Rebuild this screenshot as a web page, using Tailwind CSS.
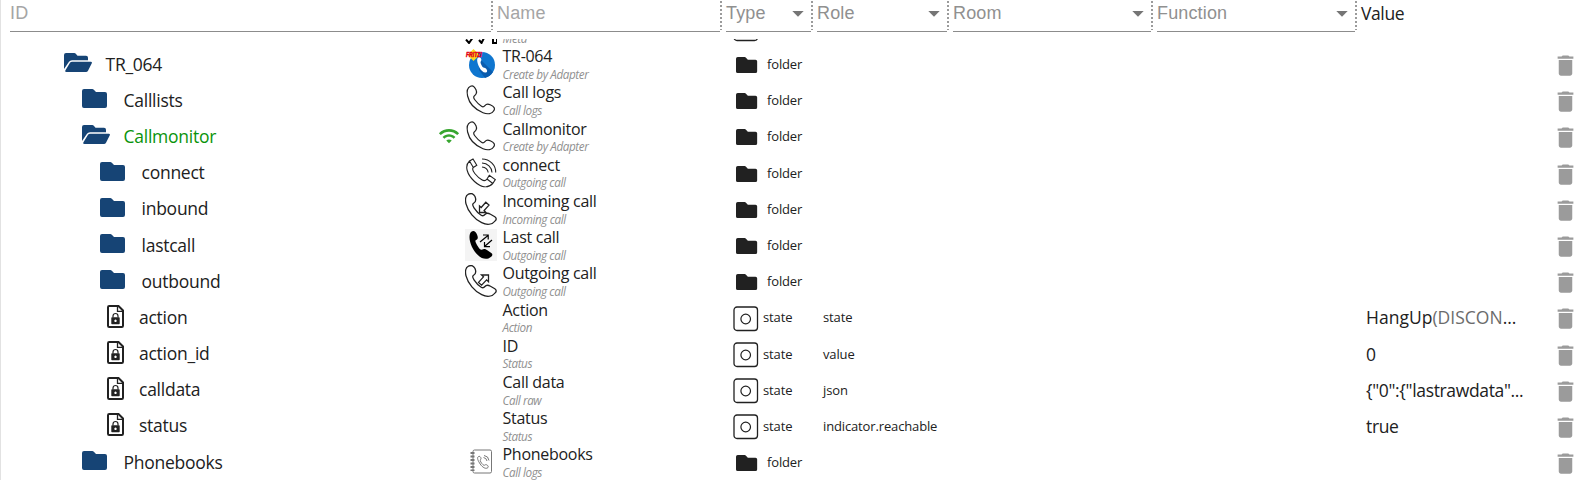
<!DOCTYPE html>
<html lang="en">
<head>
<meta charset="utf-8">
<title>Objects</title>
<script src="https://cdn.jsdelivr.net/npm/@tailwindcss/browser@4"></script>
</head>
<body class="bg-white">
<svg class="hidden">
  <symbol id="closed" viewBox="0 0 26 20"><path fill="currentColor" d="M2 0h8.200q1 0 1.600.7l2.200 2.400h9q2 0 2 2V17q0 2-2 2H2q-2 0-2-2V2Q0 0 2 0z"/></symbol>
  <symbol id="open" viewBox="0 0 29 20"><path fill="currentColor" d="M2 0h8.200q1 0 1.600.700l1.700 2h8.500q2 0 2 2V7.300H8q-2 0-3 1.500L0 16V2Q0 0 2 0zM8.300 8.700H27q1.500 0 .8 1.500L24 17.700Q23.300 19 22 19H2.500Q.7 19 1.300 17.500L6 9.700Q6.700 8.700 8.300 8.700z"/></symbol>
  <symbol id="doc" viewBox="0 0 18 24"><path fill="none" stroke="currentColor" stroke-width="2" d="M2.200 1H11.500L16 5.500V20.800q0 1.200-1.200 1.200H2.200Q1 22 1 20.800V2.200Q1 1 2.200 1z"/><path fill="none" stroke="currentColor" stroke-width="1.300" d="M10.500 1V6.300H16"/><path fill="none" stroke="currentColor" stroke-width="1.200" d="M6 12.500V11a2.500 2.500 0 0 1 5 0v1.500"/><path fill="currentColor" fill-rule="evenodd" d="M5 12.300h7q.7 0 .7.700v5.600q0 .7-.7.700H5q-.7 0-.7-.700V13q0-.7.7-.700zM8.500 14.600a1.200 1.200 0 1 0 .010 0z"/></symbol>
  <symbol id="trash" viewBox="0 0 24 24"><path fill="currentColor" d="M6 19c0 1.100.9 2 2 2h8c1.100 0 2-.9 2-2V7H6v12zM19 4h-3.500l-1-1h-5l-1 1H5v2h14V4z"/></symbol>
  <symbol id="state" viewBox="0 0 26 26"><rect x="1" y="1" width="23.500" height="23.500" rx="3" fill="none" stroke="currentColor" stroke-width="1.300"/><circle cx="12.700" cy="13" r="4.800" fill="none" stroke="currentColor" stroke-width="1.200"/></symbol>
  <symbol id="wifi" viewBox="0 0 24 24"><path fill="currentColor" d="M1 9l2 2c4.970-4.970 13.030-4.970 18 0l2-2C16.930 2.930 7.080 2.930 1 9zm8 8l3 3 3-3c-1.650-1.660-4.340-1.660-6 0zm-4-4l2 2c2.760-2.760 7.240-2.760 10 0l2-2C15.140 9.140 8.870 9.140 5 13z"/></symbol>
  <symbol id="phone" viewBox="0 0 32 32"><path fill="none" stroke="currentColor" stroke-width="1.200" d="M5.500 2.300C8 1.200 9.600 2.500 11 5.800c1.200 3 .8 4.300-1.500 5.900-1.300 1-.9 2.500.5 4.300 2 2.600 4 4.800 6.500 6.300 1.500.9 2.400.6 3.400-.7 1.400-1.700 2.900-2 5.300-.8 4.200 2 5 3.500 3.800 5.600-2 3.500-6.500 4.200-11 2.300C9.500 25.200 4 18.500 2.600 12 1.600 7.500 2.300 3.800 5.500 2.300z"/></symbol>
  <symbol id="handset" viewBox="0 0 32 32"><path fill="none" stroke="currentColor" stroke-width="1.300" d="M3.500 1.200C6.500-.3 8.800.8 10 3.600c1.400 3.400 1.200 5.200-1.400 6.700-1.400.8-1 2.300.4 4.500 2 3 4.300 5.600 7.200 7.400 1.500.9 2.600.7 3.700-.7 1.200-1.500 2.900-1.800 5.600-.3l4.300 2.500c1.600 1 1.800 2.600.6 4-3 4-8.500 4.600-13.700 2C9.500 26.300 3 18.500 1 10.800 0 6.500.6 2.600 3.500 1.200z"/></symbol>
</svg>
<div class="h-[480px] w-[1587px] overflow-hidden border-l border-[#e2e2e2] font-['Open_Sans','Noto_Sans',sans-serif] text-[#212121]">
  <header id="head" class="flex h-[39px] items-start pl-[9px] font-['Liberation_Sans',Arial,sans-serif] text-[18px] leading-[26px]"></header>
  <main id="rows" class="flex h-[441px] flex-col overflow-hidden"></main>
</div>
<script>
const heads = [
  ['ID', 'w-[481px] text-[#a5a5a5]', 0], ['Name', 'w-[223px] text-[#a5a5a5]', 0],
  ['Type', 'w-[85px] text-[#909090]', 1], ['Role', 'w-[130px] text-[#909090]', 1],
  ['Room', 'w-[198px] text-[#909090]', 1], ['Function', 'w-[198px] text-[#909090]', 1]];
const caret = '<svg class="mr-[7.500px] mt-[11px] h-[6px] w-[12px] text-[#757575]" viewBox="0 0 12 6"><path fill="currentColor" d="M.3 0h11.400L6 5.700z"/></svg>';
const dots = '<svg class="mr-[4px] h-[30px] w-[2px]" viewBox="0 0 2 30"><path stroke="#9b9b9b" stroke-width="2" stroke-dasharray="2 2" d="M1 1V30"/></svg>';
document.getElementById('head').innerHTML = heads.map(([t, c, a]) =>
  `<div class="flex h-[32px] shrink-0 justify-between border-b border-[#8c8c8c] tracking-[0.15px] ${c}"><span>${t}</span>${a ? caret : ''}</div>${dots}`).join('') +
  `<div class="font-['Open_Sans','Noto_Sans',sans-serif] text-[17.500px] tracking-[-0.4px]">Value</div>`;

const use = (id, c) => `<svg class="shrink-0 ${c}"><use href="#${id}"/></svg>`;
const pic = inner => `<svg class="size-[32px] shrink-0 text-[#222]" viewBox="0 0 32 32">${inner}</svg>`;
const pics = {
  none: '<span class="w-[32px] shrink-0"></span>',
  clip: pic('<path fill="none" stroke="#000" stroke-width="2" d="M1 27.500l3 3.500 3.500-5M14 28l2.500 3 3-6M28 25v6h4v-6"/>'),
  tr: pic('<circle cx="17" cy="17" r="13" fill="#0f76cf"/><path fill="#0a5cae" d="M16 12l12 12a13 13 0 0 1-8 6l-6-8z"/><path fill="#fff" d="M13.200 9.500c2-1.200 4 2 2.800 3.600-.8 1-.6 1.800.3 3.600.9 1.900 1.700 3 3 3 1.700 0 3.700 3 2.500 4.200-2 1.800-5.500-.7-7.500-4.700-2-3.900-3-8.500-1.100-9.700z"/><path fill="#ffd91a" d="M8.500 1l6 6-6 6-6-6z"/><text x="1" y="9" font-family="Liberation Sans" font-size="7" font-weight="700" font-style="italic" fill="#e2001a" stroke="#e2001a" stroke-width=".5" textLength="16" lengthAdjust="spacingAndGlyphs">FRITZ!</text>'),
  phone: pic('<use href="#phone"/>'),
  connect: pic('<g fill="none" stroke="currentColor" stroke-width="1.100"><path d="M4.500 4L8 2l3.800 6.300L8.300 10.500zM22 22l2.300-3.600 6 4.200-2.500 3.900zM4.500 4C-.8 9 2 17.500 9.500 24.500c6 5.500 13 7.500 18.300 2M8.300 10.500c-1.500 1.500-.5 3.500 1.500 6 2.200 2.700 4.700 5 7 6.300 2 1.200 4 .9 5.200-.8"/><path d="M17 2C25 2 31 8.500 30.700 15.500M17 6c5.500.2 9.800 4.300 10 9.500M17 10c3.300.2 5.700 2.300 6.200 5.500"/></g>'),
  incoming: pic('<use href="#handset"/><path fill="none" stroke="currentColor" stroke-width="1.300" d="M14.500 13v6.500h6.500l-1.900-2 4.900-5.400-3.200-2.900-4.600 5.300z"/>'),
  outgoing: pic('<use href="#handset"/><path fill="none" stroke="currentColor" stroke-width="1.300" d="M23.500 10h-7l2 1.900-5 5.500 3.100 2.800 5-5.300 1.900 1.900z"/>'),
  last: pic('<rect width="32" height="32" fill="#f4f4f4"/><path fill="#000" d="M6 3C8.500 1 10.500 2 12 5.500c1.500 3.300.8 4.800-1.300 5.800-.8.500 0 2.500 1.600 5.200 1.700 2.800 3.200 4.600 4.500 4.300 1.800-.9 3-1.300 5.500.4l4 2.800c1.700 1.300 1.200 2.600-.5 4-3.500 3-8.500 2.400-13-2C6.500 20 2 8 6 3z"/><path fill="none" stroke="#000" stroke-width="1.200" d="M15 13l8-6.500M18 6h5.200v4.500M27 11l-7.500 6.500M19.500 13v4.700H25"/>'),
  book: pic('<g fill="none" stroke="#777" stroke-width="1"><rect x="8" y="4" width="18.500" height="23" rx="1.500"/><path stroke-dasharray="2 1.500" stroke-width="4" d="M7.500 6v19"/><path d="M13.500 10.500c1.500-1 3.500 2 2 3.200-.9.800.8 3.500 2.500 5 1.200 1 1.700.5 2.500 0 1.500-.5 3.500 1.800 2.500 2.800-2 2-5.500 0-7.800-3.500-2-3-3.700-6.200-1.700-7.500zM18.500 11.500q3 .5 3.500 3.500M19 9.500q4.500.5 5 5"/></g>')
};
// level, id, picture, name, description, role, value, flags (s: state, o: open, g: connected)
const data = [
  [2, '', 'clip', '', 'Meta', '', '', 's'],
  [0, 'TR_064', 'tr', 'TR-064', 'Create by Adapter', '', '', 'o'],
  [1, 'Calllists', 'phone', 'Call logs', 'Call logs', '', '', ''],
  [1, 'Callmonitor', 'phone', 'Callmonitor', 'Create by Adapter', '', '', 'og'],
  [2, 'connect', 'connect', 'connect', 'Outgoing call', '', '', ''],
  [2, 'inbound', 'incoming', 'Incoming call', 'Incoming call', '', '', ''],
  [2, 'lastcall', 'last', 'Last call', 'Outgoing call', '', '', ''],
  [2, 'outbound', 'outgoing', 'Outgoing call', 'Outgoing call', '', '', ''],
  [2, 'action', 'none', 'Action', 'Action', 'state', '<span class="tracking-[0.01px]">HangUp<span class="text-[#6b6b6b]">(DISCON</span>...</span>', 's'],
  [2, 'action_id', 'none', 'ID', 'Status', 'value', '0', 's'],
  [2, 'calldata', 'none', 'Call data', 'Call raw', 'json', '{"0":{"lastrawdata"...', 's'],
  [2, 'status', 'none', 'Status', 'Status', 'indicator.reachable', 'true', 's'],
  [1, 'Phonebooks', 'book', 'Phonebooks', 'Call logs', '', '', '']];
const pad = ['pl-[63px]', 'pl-[81px]', 'pl-[99px]'];
const row = ([lv, id, p, name, desc, role, val, f]) => {
  const s = f.includes('s'), g = f.includes('g');
  const icon = s ? use('doc', 'ml-[7px] mr-[14px] h-[24px] w-[18px] mt-[-1px]')
    : f.includes('o') ? use('open', 'mr-[12.5px] mt-[-2px] h-[20px] w-[29px] text-[#164475]')
    : use('closed', 'mr-[15.5px] mt-[-2px] h-[20px] w-[26px] text-[#164475]');
  return `<div class="flex h-[36.19px] shrink-0 items-center whitespace-nowrap">
    <div class="flex w-[464px] shrink-0 items-center ${pad[lv]}">${id ? icon : ''}<span class="mt-[-1px] grow text-[17.500px] leading-[24px] tracking-[-0.25px] ${g ? 'text-[#0a930a]' : ''}">${id}</span>${g ? use('wifi', 'h-[22px] w-[22px] mr-[5px] text-[#37a62f]') : ''}</div>
    ${pics[p]}
    <div class="w-[229px] shrink-0 pt-px pl-[5.5px]"><div class="h-[18.6px] text-[16px] leading-[18px] tracking-[-0.28px]">${name}</div><div class="h-[16px] text-[11.700px] italic leading-[16px] tracking-[-0.4px] text-[#909090]">${desc}</div></div>
    <div class="flex w-[97px] shrink-0 items-center pl-[7px] text-[13px] tracking-[-0.14px]">${s ? use('state', 'mr-[4px] mt-[3px] size-[26px]') : use('closed', 'ml-[3px] mr-[9px] mt-[3px] h-[17px] w-[22px]')}<span class="mt-[1.500px]">${id ? (s ? 'state' : 'folder') : ''}</span></div>
    <div class="w-[543px] shrink-0 pt-[1.500px] text-[13px] tracking-[-0.14px]">${role}</div>
    <div class="w-[186px] shrink-0 text-[17.500px] leading-[24px] tracking-[-0.35px]">${val}</div>
    ${id ? use('trash', 'mt-[3px] size-[27px] text-[#9b9b9b]') : ''}
  </div>`;
};
const [first, ...rest] = data;
document.getElementById('rows').innerHTML =
  `<div class="flex h-[7px] shrink-0 flex-col justify-end overflow-hidden">${row(first)}</div>` + rest.map(row).join('');
</script>
</body>
</html>
